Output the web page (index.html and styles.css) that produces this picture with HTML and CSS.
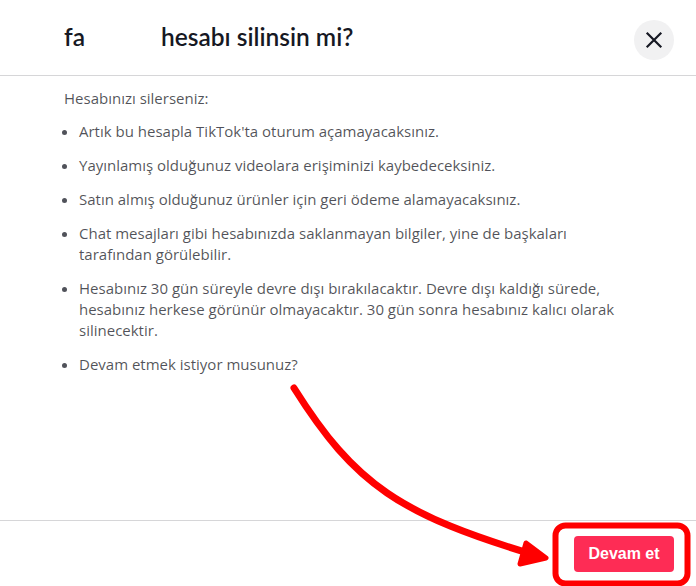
FILE: index.html
```html
<!DOCTYPE html>
<html lang="tr">
<head>
<meta charset="utf-8">
<link rel="stylesheet" href="styles.css">
</head>
<body>
<div class="modal">
  <header class="modal-header">
    <h1 class="title"><span class="user">fa</span><span>hesabı silinsin mi?</span></h1>
    <button class="close" aria-label="Kapat">
      <svg width="20" height="20" viewBox="0 0 20 20"><path d="M3.5 3.5 L16.5 16.5 M16.5 3.5 L3.5 16.5" stroke="#161823" stroke-width="2.2" stroke-linecap="square" fill="none"/></svg>
    </button>
  </header>
  <main class="modal-body">
    <p class="intro">Hesabınızı silerseniz:</p>
    <ul class="list">
      <li>Artık bu hesapla TikTok'ta oturum açamayacaksınız.</li>
      <li>Yayınlamış olduğunuz videolara erişiminizi kaybedeceksiniz.</li>
      <li>Satın almış olduğunuz ürünler için geri ödeme alamayacaksınız.</li>
      <li>Chat mesajları gibi hesabınızda saklanmayan bilgiler, yine de başkaları tarafından görülebilir.</li>
      <li>Hesabınız 30 gün süreyle devre dışı bırakılacaktır. Devre dışı kaldığı sürede, hesabınız herkese görünür olmayacaktır. 30 gün sonra hesabınız kalıcı olarak silinecektir.</li>
      <li>Devam etmek istiyor musunuz?</li>
    </ul>
  </main>
  <footer class="modal-footer">
    <button class="primary">Devam et</button>
  </footer>
</div>
<svg class="annotation" width="696" height="586" viewBox="0 0 696 586">
  <path d="M294 388 C 355 485, 400 515, 538 556" stroke="#ff0000" stroke-width="7" stroke-linecap="round" fill="none"/>
  <path d="M526 543 L546 558 L520 564 Z" fill="#ff0000" stroke="#ff0000" stroke-width="5" stroke-linejoin="round"/>
  <rect x="555.5" y="525.5" width="132" height="58" rx="10" ry="10" stroke="#ff0000" stroke-width="6" fill="none"/>
</svg>
</body>
</html>
```

FILE: styles.css
```css
* { box-sizing: border-box; }
html, body { margin: 0; padding: 0; }
body {
  width: 696px;
  height: 586px;
  overflow: hidden;
  background: #fff;
  font-family: "Open Sans", "Liberation Sans", Arial, sans-serif;
  position: relative;
}
.modal {
  display: flex;
  flex-direction: column;
  height: 586px;
}
.modal-header {
  height: 76px;
  border-bottom: 1px solid #d6d6d8;
  display: flex;
  align-items: center;
  justify-content: space-between;
  padding: 0 22px 0 64px;
}
.title {
  margin: 0;
  font-family: Lato, "Liberation Sans", Arial, sans-serif;
  font-size: 24.5px;
  font-weight: 600;
  color: #161823;
  display: flex;
  gap: 76px;
  padding-bottom: 2px;
}
.close {
  width: 40px;
  height: 40px;
  border-radius: 50%;
  border: none;
  background: #f1f1f2;
  display: flex;
  align-items: center;
  justify-content: center;
  padding: 0;
  margin-top: 4px;
}
.modal-body {
  flex: 1;
  padding: 12px 72px 0 64px;
  color: rgba(22, 24, 35, 0.75);
  font-size: 15px;
  line-height: 21px;
}
.intro { margin: 0; }
.list {
  margin: 12px 0 0 0;
  padding: 0 0 0 15px;
}
.list li { margin-bottom: 13px; }
.modal-footer {
  border-top: 1px solid #d6d6d8;
  height: 66px;
  display: flex;
  justify-content: flex-end;
  align-items: flex-start;
  padding: 15px 22px 0 0;
}
.primary {
  width: 100px;
  height: 36px;
  border: none;
  border-radius: 4px;
  background: #fe2c55;
  color: #fff;
  font-family: "Liberation Sans", Arial, sans-serif;
  font-weight: 700;
  font-size: 16px;
}
.annotation {
  position: absolute;
  left: 0;
  top: 0;
  pointer-events: none;
}
```
